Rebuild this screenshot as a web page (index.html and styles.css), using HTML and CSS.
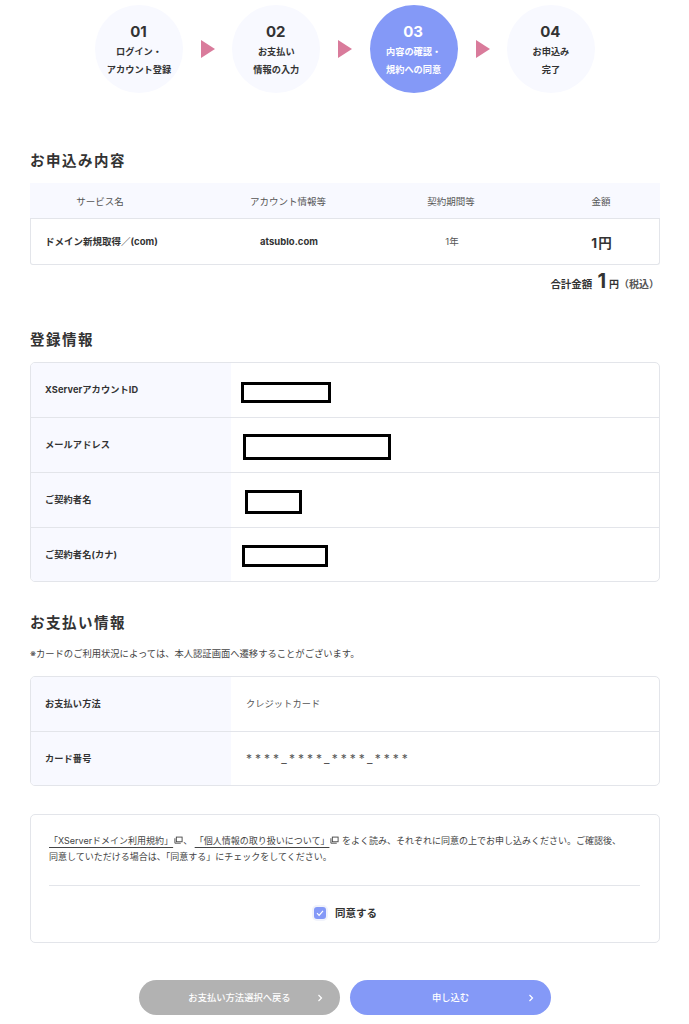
FILE: index.html
```html
<!DOCTYPE html>
<html lang="ja">
  <head>
    <meta charset="UTF-8" />
    <meta name="viewport" content="width=device-width, initial-scale=1.0" />
    <title>お申込み内容の確認</title>
    <link rel="stylesheet" href="styles.css">
  </head>
  <body>
    <!-- Steps -->
    <ol class="steps">
      <li class="step">
        <span class="step-num">01</span>
        <span class="step-label">ログイン・<br />アカウント登録</span>
      </li>
      <li class="step-arrow"></li>
      <li class="step">
        <span class="step-num">02</span>
        <span class="step-label">お支払い<br />情報の入力</span>
      </li>
      <li class="step-arrow"></li>
      <li class="step active">
        <span class="step-num">03</span>
        <span class="step-label">内容の確認・<br />規約への同意</span>
      </li>
      <li class="step-arrow"></li>
      <li class="step">
        <span class="step-num">04</span>
        <span class="step-label">お申込み<br />完了</span>
      </li>
    </ol>

    <!-- Order -->
    <h2 class="heading heading-order">お申込み内容</h2>
    <div class="order-head">
      <span>サービス名</span>
      <span>アカウント情報等</span>
      <span>契約期間等</span>
      <span>金額</span>
    </div>
    <div class="order-row">
      <span class="order-name">ドメイン新規取得／(com)</span>
      <span class="order-domain">atsublo.com</span>
      <span class="order-term">1年</span>
      <span class="order-price">1円</span>
    </div>
    <p class="total">
      <b>合計金額</b><span class="total-num">1</span><span class="total-unit">円</span><span class="total-tax">（税込）</span>
    </p>

    <!-- Registration -->
    <h2 class="heading heading-reg">登録情報</h2>
    <dl class="info">
      <div class="info-row">
        <dt>XServerアカウントID</dt>
        <dd><span class="redact redact-id"></span></dd>
      </div>
      <div class="info-row">
        <dt>メールアドレス</dt>
        <dd><span class="redact redact-mail"></span></dd>
      </div>
      <div class="info-row">
        <dt>ご契約者名</dt>
        <dd><span class="redact redact-name"></span></dd>
      </div>
      <div class="info-row">
        <dt>ご契約者名(カナ)</dt>
        <dd><span class="redact redact-kana"></span></dd>
      </div>
    </dl>

    <!-- Payment -->
    <h2 class="heading heading-pay">お支払い情報</h2>
    <p class="note">※カードのご利用状況によっては、本人認証画面へ遷移することがございます。</p>
    <dl class="info">
      <div class="info-row">
        <dt>お支払い方法</dt>
        <dd class="info-text">クレジットカード</dd>
      </div>
      <div class="info-row">
        <dt>カード番号</dt>
        <dd class="info-text card-num">****_****_****_****</dd>
      </div>
    </dl>

    <!-- Agreement -->
    <section class="agree">
      <p class="agree-text">
        <a href="#">「XServerドメイン利用規約」</a><svg class="ext" viewBox="0 0 10 10"><path d="M1 2.5V8h6.5" /><rect x="2.6" y="1.2" width="6.4" height="5.2" /></svg>、
        <a href="#">「個人情報の取り扱いについて」</a><svg class="ext" viewBox="0 0 10 10"><path d="M1 2.5V8h6.5" /><rect x="2.6" y="1.2" width="6.4" height="5.2" /></svg> をよく読み、それぞれに同意の上でお申し込みください。ご確認後、<br />同意していただける場合は、「同意する」にチェックをしてください。
      </p>
      <label class="agree-check">
        <span class="checkbox">
          <svg viewBox="0 0 12 12"><path d="M3 6.2l2.1 2.1L9 3.8" /></svg>
        </span>
        同意する
      </label>
    </section>

    <!-- Buttons -->
    <div class="buttons">
      <button class="btn btn-back">お支払い方法選択へ戻る<svg class="chev" viewBox="0 0 8 12"><path d="M2 2l4 4-4 4" /></svg></button>
      <button class="btn btn-submit">申し込む<svg class="chev" viewBox="0 0 8 12"><path d="M2 2l4 4-4 4" /></svg></button>
    </div>
  </body>
</html>
```

FILE: styles.css
```css
/* General */
body {
  font-family: Inter, "Noto Sans CJK JP", sans-serif;
  color: #333;
  background: #fff;
  margin: 0;
  padding: 5px 29px 0 30px;
  font-size: 10px;
  overflow-x: hidden;
}

p,
dl,
dd,
ol,
h2 {
  margin: 0;
  padding: 0;
}

/* Steps */
.steps {
  display: flex;
  align-items: center;
  list-style: none;
  margin-left: 65px;
}

.step {
  width: 88px;
  height: 88px;
  border-radius: 50%;
  background-color: #f8f9ff;
  display: flex;
  flex-direction: column;
  align-items: center;
  text-align: center;
  font-weight: bold;
  flex-shrink: 0;
}

.step.active {
  background-color: #8499f7;
  color: #fff;
}

.step-num {
  font-size: 15px;
  line-height: 18px;
  margin-top: 18px;
  margin-left: -1px;
}

.step-label {
  font-size: 9.2px;
  line-height: 18px;
  margin-top: 2px;
  white-space: nowrap;
}

.step-arrow {
  width: 0;
  height: 0;
  border-left: 14px solid #d97b9b;
  border-top: 9px solid transparent;
  border-bottom: 9px solid transparent;
  margin: 0 17.3px 0 18px;
}

/* Headings */
.heading {
  font-size: 14.5px;
  line-height: 20px;
  font-weight: bold;
  letter-spacing: 1.5px;
}

.heading-order {
  margin-top: 58px;
}

.heading-reg {
  margin-top: 38px;
}

.heading-pay {
  margin-top: 31px;
}

/* Order table */
.order-head,
.order-row {
  display: grid;
  grid-template-columns: 140px 236px 90px 164px;
  align-items: center;
  text-align: center;
}

.order-head {
  height: 36px;
  margin-top: 12px;
  background-color: #f8f9ff;
  color: #555;
  font-size: 9.5px;
  border-bottom: 1px solid #e3e5ea;
  box-sizing: border-box;
}

.order-head span:last-child,
.order-row span:last-child {
  padding-left: 46px;
}

.order-row {
  height: 46px;
  border: 1px solid #e3e5ea;
  border-top: none;
  border-radius: 0 0 3px 3px;
  box-sizing: border-box;
  margin-bottom: 0;
}

.order-name {
  text-align: left;
  padding: 0 0 1px 14px;
  font-size: 9.5px;
  font-weight: bold;
  white-space: nowrap;
}

.order-domain {
  font-size: 9.5px;
  padding-bottom: 1px;
  font-weight: bold;
}

.order-term {
  font-size: 9.5px;
  padding-bottom: 1px;
  color: #555;
}

.order-price {
  font-size: 13.5px;
  font-weight: bold;
  letter-spacing: 1px;
}

.total {
  display: flex;
  justify-content: flex-end;
  align-items: baseline;
  height: 22px;
  margin-top: 5px;
  padding-right: 1px;
  line-height: 22px;
}

.total b {
  font-size: 10.5px;
}

.total-num {
  font-size: 20px;
  font-weight: bold;
  margin: 0 3px 0 5px;
}

.total-unit {
  font-weight: bold;
}

.total-tax {
  font-weight: bold;
  color: #555;
}

/* Info tables */
.info {
  margin-top: 13px;
  border: 1px solid #e3e5ea;
  border-radius: 5px;
  overflow: hidden;
}

.info-row {
  display: flex;
  height: 54px;
  border-bottom: 1px solid #e3e5ea;
}

.info-row:last-child {
  border-bottom: none;
  height: 53px;
}

.info dt {
  width: 200px;
  box-sizing: border-box;
  padding: 0 0 2px 14px;
  background-color: #f8f9ff;
  font-size: 9.2px;
  letter-spacing: 0.1px;
  font-weight: bold;
  display: flex;
  align-items: center;
  flex-shrink: 0;
}

.info dd {
  display: flex;
  align-items: center;
}

.info-text {
  padding: 0 0 2px 15px;
  font-size: 9.2px;
  color: #555;
  letter-spacing: 0.1px;
}

.info .card-num {
  letter-spacing: 3px;
  font-size: 12px;
  padding-bottom: 0;
}

/* Black boxes that hide personal details */
.redact {
  display: block;
  box-sizing: border-box;
  border: 3px solid #000;
}

.redact-id {
  width: 90px;
  height: 21px;
  margin: 5px 0 0 10px;
}

.redact-mail {
  width: 148px;
  height: 26px;
  margin: 3px 0 0 12px;
}

.redact-name {
  width: 57px;
  height: 24px;
  margin: 3px 0 0 14px;
}

.redact-kana {
  width: 86px;
  height: 22px;
  margin: 3px 0 0 11px;
}

.note {
  font-size: 9.3px;
  line-height: 14px;
  margin-top: 14px;
  color: #444;
}

.heading-reg + .info {
  margin-top: 12px;
}

.heading-pay + .note + .info {
  margin-top: 15px;
}

/* Agreement */
.agree {
  margin-top: 28px;
  height: 129px;
  box-sizing: border-box;
  border: 1px solid #e3e5ea;
  border-radius: 5px;
  padding: 18px 19px 0 18px;
}

.agree-text {
  font-size: 9px;
  line-height: 16px;
  height: 52px;
  border-bottom: 1px solid #e3e5ea;
  color: #444;
  white-space: nowrap;
}

.agree-text a {
  color: #444;
  text-decoration: underline;
  text-underline-offset: 3px;
}

.ext {
  width: 9px;
  height: 9px;
  vertical-align: -1px;
  margin-left: 1px;
  fill: none;
  stroke: #444;
  stroke-width: 1;
}

.agree-check {
  display: flex;
  justify-content: center;
  align-items: center;
  gap: 9px;
  margin-top: 19px;
  margin-left: 2px;
  font-size: 10.5px;
  font-weight: bold;
}

.checkbox {
  width: 12px;
  height: 12px;
  border-radius: 3px;
  background-color: #8499f7;
  box-shadow: 0 0 0 2px #f1f3fb;
}

.checkbox svg {
  display: block;
  fill: none;
  stroke: #fff;
  stroke-width: 1.2;
}

/* Buttons */
.buttons {
  display: flex;
  justify-content: center;
  gap: 10px;
  margin-top: 37px;
}

.btn {
  position: relative;
  width: 201px;
  height: 35px;
  border: none;
  border-radius: 18px;
  color: #fff;
  font-family: inherit;
  font-size: 9.3px;
  font-weight: 500;
  padding: 0 0 1px;
  cursor: pointer;
}

.btn-back {
  background-color: #b2b2b2;
}

.btn-submit {
  background-color: #8499f7;
}

.chev {
  position: absolute;
  right: 17px;
  top: 13px;
  width: 6px;
  height: 10px;
  fill: none;
  stroke: #fff;
  stroke-width: 1.6;
}
```
